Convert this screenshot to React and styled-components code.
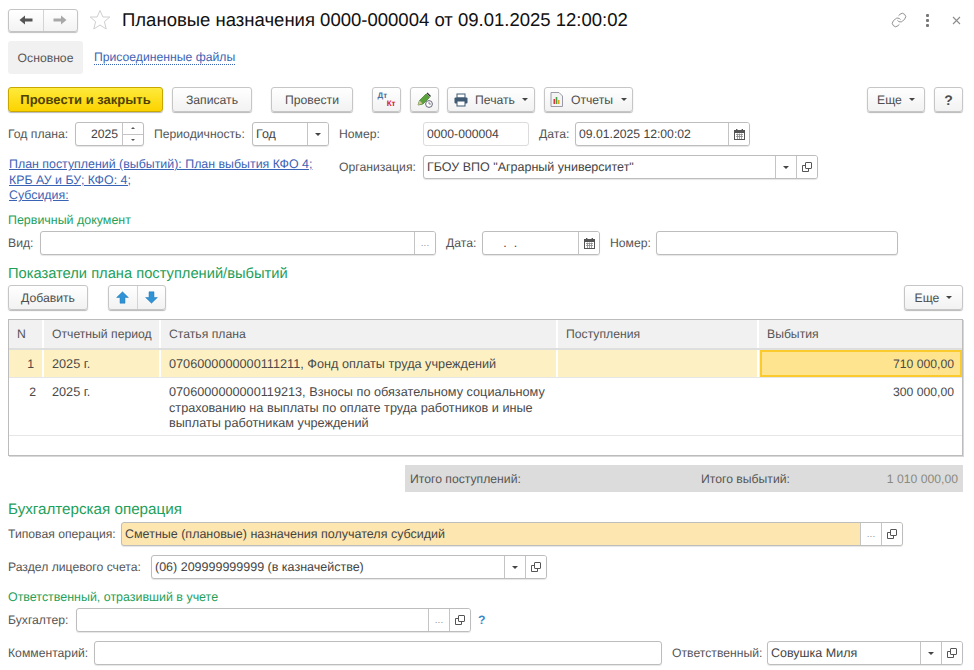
import React from "react";
import styled, { createGlobalStyle } from "styled-components";
import { Link as LinkIcon } from "lucide-react";

const GlobalStyle = createGlobalStyle`
  html, body {
    margin: 0;
    padding: 0;
    background: #fff;
  }
  body {
    font-family: "Liberation Sans", Arial, sans-serif;
    font-size: 12.2px;
    color: #4b4b4b;
    text-rendering: geometricPrecision;
  }
`;

const Page = styled.div`
  width: 974px;
  height: 670px;
  box-sizing: border-box;
  padding: 8px 11px 0 8px;
  overflow: hidden;
  display: flex;
  flex-direction: column;
`;

const Row = styled.div`
  display: flex;
  align-items: center;
  height: ${(p) => p.$h || 24}px;
  margin-top: ${(p) => p.$mt || 0}px;
  flex: none;
`;

const Spacer = styled.div`
  flex: 1;
`;

const NavGroup = styled.div`
  display: flex;
  width: 70px;
  height: 23px;
  box-sizing: border-box;
  border: 1px solid #c4c4c4;
  border-radius: 3px;
  box-shadow: 0 1px 1px rgba(0, 0, 0, 0.25);
  background: linear-gradient(#fff, #f3f3f3);
`;

const NavButton = styled.div`
  flex: 1;
  display: flex;
  align-items: center;
  justify-content: center;
  & + & {
    border-left: 1px solid #d4d4d4;
  }
`;

const StarWrap = styled.div`
  display: flex;
  margin-left: 11px;
  margin-right: 11px;
`;

const Title = styled.h1`
  margin: 0;
  font-size: 18.52px;
  font-weight: normal;
  color: #111;
  white-space: nowrap;
`;

const HeaderActions = styled.div`
  display: flex;
  align-items: center;
  margin-right: -8px;
`;

const HeaderIcon = styled.div`
  width: 29px;
  display: flex;
  justify-content: center;
  color: #808080;
`;

const Dots = styled.div`
  display: flex;
  flex-direction: column;
  gap: 2px;
  & > i {
    display: block;
    width: 3px;
    height: 3px;
    background: #777;
    border-radius: 1px;
  }
`;

const Tab = styled.div`
  width: 75px;
  height: 33px;
  display: flex;
  align-items: center;
  justify-content: center;
  background: #f1f1f1;
  border-radius: 3px;
  color: #555;
`;

const TabLink = styled.span`
  margin-left: 11px;
  color: #3b63b4;
  border-bottom: 1px dotted #3b63b4;
  line-height: 13px;
`;

const Button = styled.div`
  display: flex;
  align-items: center;
  justify-content: center;
  gap: ${(p) => p.$gap || 0}px;
  box-sizing: border-box;
  flex: none;
  width: ${(p) => p.$w}px;
  height: 25px;
  margin-left: ${(p) => p.$ml || 0}px;
  border: 1px solid ${(p) => (p.$primary ? "#c8a800" : "#c6c6c6")};
  border-radius: 3px;
  box-shadow: 0 1px 1px rgba(0, 0, 0, 0.28);
  background: ${(p) =>
    p.$primary
      ? "linear-gradient(#ffea3b, #fbd300)"
      : "linear-gradient(#fff, #f2f2f2)"};
  color: ${(p) => (p.$primary ? "#4f4100" : "#4e4e4e")};
  font-weight: ${(p) => (p.$primary || p.$bold ? "bold" : "normal")};
  font-size: ${(p) => p.$size || 12.2}px;
  white-space: nowrap;
`;

const ButtonGroup = styled(Button)`
  padding: 0;
  gap: 0;
`;

const GroupCell = styled.div`
  flex: 1;
  height: 100%;
  display: flex;
  align-items: center;
  justify-content: center;
  & + & {
    border-left: 1px solid #d4d4d4;
  }
`;

const Caret = styled.span`
  display: inline-block;
  width: 0;
  height: 0;
  border-left: 3px solid transparent;
  border-right: 3px solid transparent;
  border-top: 3px solid #444;
`;

const DebitCredit = styled.div`
  display: flex;
  flex-direction: column;
  font-size: 8px;
  font-weight: bold;
  line-height: 8px;
  width: 18px;
`;

const Debit = styled.span`
  color: #4c6e9e;
`;

const Credit = styled.span`
  color: #d4202a;
  align-self: flex-end;
`;

const Label = styled.span`
  flex: none;
  margin-left: ${(p) => p.$ml || 0}px;
  width: ${(p) => (p.$w ? `${p.$w}px` : "auto")};
  color: #555;
  white-space: nowrap;
`;

const Field = styled.div`
  display: flex;
  flex: none;
  box-sizing: border-box;
  width: ${(p) => p.$w}px;
  height: ${(p) => p.$h || 24}px;
  margin-left: ${(p) => p.$ml || 0}px;
  border: 1px solid ${(p) => (p.$light ? "#dcdcdc" : "#bdbdbd")};
  border-radius: 3px;
  background: ${(p) => p.$bg || "#fff"};
  box-shadow: ${(p) => (p.$light ? "none" : "0 1px 1px rgba(0, 0, 0, 0.1)")};
  overflow: hidden;
`;

const FieldValue = styled.div`
  flex: 1;
  display: flex;
  align-items: center;
  justify-content: ${(p) => (p.$right ? "flex-end" : "flex-start")};
  padding: 0 ${(p) => (p.$right ? 4 : 3)}px;
  color: #444;
  font-size: ${(p) => (p.$num ? 12.2 : 12.5)}px;
  white-space: nowrap;
  min-width: 0;
`;

const Addon = styled.div`
  flex: none;
  width: 20px;
  display: flex;
  align-items: center;
  justify-content: center;
  border-left: 1px solid #c4c4c4;
  color: #999;
  background: #fff;
  font-size: 10px;
`;

const Spin = styled.div`
  flex: none;
  width: 20px;
  display: flex;
  flex-direction: column;
  border-left: 1px solid #c4c4c4;
`;

const SpinPart = styled.div`
  flex: 1;
  display: flex;
  align-items: center;
  justify-content: center;
  & + & {
    border-top: 1px solid #c4c4c4;
  }
`;

const SpinArrow = styled.span`
  width: 0;
  height: 0;
  border-left: 2px solid transparent;
  border-right: 2px solid transparent;
  ${(p) => (p.$up ? "border-bottom" : "border-top")}: 2px solid #555;
`;

const OrgRow = styled.div`
  display: flex;
  align-items: flex-start;
  margin-top: 9px;
  height: 58px;
  flex: none;
`;

const LinksBlock = styled.div`
  width: 331px;
  flex: none;
  display: flex;
  flex-direction: column;
  align-items: flex-start;
  padding-left: 1px;
  padding-top: 2px;
  box-sizing: border-box;
  font-size: 12.4px;
  line-height: 15.5px;
`;

const PlanLink = styled.span`
  color: #3b63b4;
  text-decoration: underline;
  white-space: nowrap;
`;

const OrgField = styled.div`
  display: flex;
  align-items: center;
`;

const GroupTitle = styled.div`
  color: #1ea05a;
  font-size: ${(p) => p.$size || 12.45}px;
  margin-top: ${(p) => p.$mt || 0}px;
  height: ${(p) => p.$h || 14}px;
  line-height: ${(p) => p.$h || 14}px;
  flex: none;
  white-space: nowrap;
`;

const Table = styled.div`
  flex: none;
  width: 955px;
  height: 137px;
  margin-top: 9px;
  box-sizing: border-box;
  border: 1px solid #bcbcbc;
  box-shadow: 1px 1px 0 #d8d8d8;
  background: #fff;
`;

const TableRow = styled.div`
  display: grid;
  grid-template-columns: 35px 117px 397px 201px 203px;
  height: ${(p) => p.$h}px;
  box-sizing: border-box;
  background: ${(p) => p.$bg || "#fff"};
  border-bottom: ${(p) => p.$line || "1px solid #e6e6e6"};
`;

const HeadCell = styled.div`
  display: flex;
  align-items: center;
  padding-left: 8px;
  color: #555;
  white-space: nowrap;
  border-right: 2px solid #fff;
  &:last-child {
    border-right: 0;
  }
`;

const Cell = styled.div`
  box-sizing: border-box;
  padding: ${(p) => (p.$tall ? "7px" : "2px")} 8px 0 8px;
  display: flex;
  align-items: ${(p) => (p.$tall ? "flex-start" : "center")};
  justify-content: ${(p) => (p.$right ? "flex-end" : "flex-start")};
  color: #4a4a4a;
  font-size: ${(p) => (p.$right ? 12.2 : 12.7)}px;
  line-height: 15.5px;
  border-right: ${(p) => (p.$divider ? "2px solid #fff" : "0")};
  background: ${(p) => (p.$active ? "#fee48f" : "transparent")};
  outline: ${(p) => (p.$active ? "2px solid #fbcb2e" : "0")};
  outline-offset: -2px;
  margin-left: ${(p) => (p.$active ? 1 : 0)}px;
`;

const Totals = styled.div`
  flex: none;
  display: flex;
  align-items: center;
  align-self: flex-end;
  width: 558px;
  height: 27px;
  margin-top: 9px;
  box-sizing: border-box;
  padding: 0 5px;
  background: #dcdcdc;
  color: #555;
`;

const TotalSum = styled.span`
  margin-left: auto;
  color: #8a8a80;
`;

const HelpMark = styled.span`
  margin-left: 7px;
  color: #3a87c8;
  font-weight: bold;
`;

const IconCopy = () => (
  <svg width="12" height="12" viewBox="0 0 12 12" fill="none" stroke="#555" strokeWidth="1">
    <rect x="4.5" y="1.5" width="6" height="6" rx="0.5" />
    <path d="M4.5 4.5H1.5V10.5H7.5V7.5" />
  </svg>
);

const IconCalendar = () => (
  <svg width="11" height="11" viewBox="0 0 11 11">
    <rect x="0.5" y="1.5" width="10" height="9" fill="#fff" stroke="#555" />
    <rect x="0.5" y="1" width="10" height="3" fill="#555" />
    <rect x="2" y="0" width="1.4" height="2" fill="#555" />
    <rect x="7.6" y="0" width="1.4" height="2" fill="#555" />
    <path d="M2 5.5H9M2 7.5H9M3.5 4.5V10M5.5 4.5V10M7.5 4.5V10" stroke="#888" strokeWidth="0.8" />
  </svg>
);

const IconNavArrow = ({ flip, color }) => (
  <svg width="14" height="10" viewBox="0 0 14 10" style={flip ? { transform: "scaleX(-1)" } : undefined}>
    <path d="M0.5 5L6 0.5V3.6H13.5V6.4H6V9.5Z" fill={color} />
  </svg>
);

const IconStar = () => (
  <svg width="22" height="22" viewBox="0 0 22 22" fill="#fff" stroke="#cfcfcf" strokeWidth="1">
    <path d="M11 1.5L13.9 8H20.8L15.4 12.6L17.2 20L11 16L4.8 20L6.6 12.6L1.2 8H8.1Z" />
  </svg>
);

const IconClose = () => (
  <svg width="9" height="9" viewBox="0 0 9 9" stroke="#8c8c8c" strokeWidth="1.1">
    <path d="M1 1L8 8M8 1L1 8" />
  </svg>
);

const IconPencil = () => (
  <svg width="18" height="18" viewBox="0 0 18 18">
    <path d="M2 14L3.5 9.5L10 3L13.5 6.5L7 13Z" fill="#5aa33c" stroke="#3d7c26" strokeWidth="0.7" />
    <path d="M2 14L3.5 9.5L6.5 12.5Z" fill="#d9c39a" />
    <path d="M10.5 2.5L11.5 1.5L15 5L14 6Z" fill="#333" />
    <circle cx="13" cy="13" r="3.4" fill="#fff" stroke="#667" />
    <path d="M13 11V13H15" fill="none" stroke="#667" strokeWidth="0.8" />
  </svg>
);

const IconPrinter = () => (
  <svg width="14" height="14" viewBox="0 0 14 14">
    <rect x="3" y="1" width="8" height="4" fill="#fff" stroke="#3f5a72" />
    <rect x="0.5" y="4.5" width="13" height="6" rx="1" fill="#3f5a72" />
    <rect x="3" y="8" width="8" height="5" fill="#fff" stroke="#3f5a72" />
  </svg>
);

const IconReport = () => (
  <svg width="13" height="15" viewBox="0 0 13 15">
    <path d="M1 .5H9L12.5 4V14.5H1Z" fill="#f4f4f4" stroke="#9a9aa8" />
    <rect x="3.5" y="7" width="1.6" height="5" fill="#d8333a" />
    <rect x="5.7" y="5" width="1.6" height="7" fill="#46a046" />
    <rect x="7.9" y="8" width="1.6" height="4" fill="#e0a020" />
  </svg>
);

const IconBlueArrow = ({ down }) => (
  <svg width="13" height="13" viewBox="0 0 13 13" style={down ? { transform: "scaleY(-1)" } : undefined}>
    <path d="M6.5 .8L12.4 6.5H9V12.2H4V6.5H.6Z" fill="#2f93d6" stroke="#2278b4" strokeWidth="0.5" />
  </svg>
);

const Dropdown = () => (
  <Addon>
    <Caret />
  </Addon>
);

const Choose = () => <Addon>...</Addon>;

const Open = () => (
  <Addon>
    <IconCopy />
  </Addon>
);

const Calendar = () => (
  <Addon>
    <IconCalendar />
  </Addon>
);

const rows = [
  {
    n: 1,
    period: "2025 г.",
    item: "0706000000000111211, Фонд оплаты труда учреждений",
    income: "",
    outcome: "710 000,00",
  },
  {
    n: 2,
    period: "2025 г.",
    item: "0706000000000119213, Взносы по обязательному социальному страхованию на выплаты по оплате труда работников и иные выплаты работникам учреждений",
    income: "",
    outcome: "300 000,00",
  },
];

const App = () => {
  return (
    <>
      <GlobalStyle />
      <Page>
        <Row $h={24}>
          <NavGroup>
            <NavButton>
              <IconNavArrow color="#555" />
            </NavButton>
            <NavButton>
              <IconNavArrow flip color="#a8a8a8" />
            </NavButton>
          </NavGroup>
          <StarWrap>
            <IconStar />
          </StarWrap>
          <Title>Плановые назначения 0000-000004 от 09.01.2025 12:00:02</Title>
          <Spacer />
          <HeaderActions>
            <HeaderIcon>
              <LinkIcon size={16} strokeWidth={1.3} />
            </HeaderIcon>
            <HeaderIcon>
              <Dots>
                <i />
                <i />
                <i />
              </Dots>
            </HeaderIcon>
            <HeaderIcon>
              <IconClose />
            </HeaderIcon>
          </HeaderActions>
        </Row>

        <Row $h={33} $mt={9}>
          <Tab>Основное</Tab>
          <TabLink>Присоединенные файлы</TabLink>
        </Row>

        <Row $h={25} $mt={13}>
          <Button $primary $w={155} $size={13}>Провести и закрыть</Button>
          <Button $w={80} $ml={9}>Записать</Button>
          <Button $w={82} $ml={19}>Провести</Button>
          <Button $w={29} $ml={19}>
            <DebitCredit>
              <Debit>Дт</Debit>
              <Credit>Кт</Credit>
            </DebitCredit>
          </Button>
          <Button $w={29} $ml={9}>
            <IconPencil />
          </Button>
          <Button $w={88} $ml={8} $gap={7}>
            <IconPrinter />
            Печать
            <Caret />
          </Button>
          <Button $w={89} $ml={9} $gap={8}>
            <IconReport />
            Отчеты
            <Caret />
          </Button>
          <Spacer />
          <Button $w={58} $gap={7}>
            Еще
            <Caret />
          </Button>
          <Button $w={29} $ml={9} $bold $size={14}>?</Button>
        </Row>

        <Row $h={24} $mt={10}>
          <Label $w={67}>Год плана:</Label>
          <Field $w={69}>
            <FieldValue $right $num>2025</FieldValue>
            <Spin>
              <SpinPart>
                <SpinArrow $up />
              </SpinPart>
              <SpinPart>
                <SpinArrow />
              </SpinPart>
            </Spin>
          </Field>
          <Label $w={98} $ml={10}>Периодичность:</Label>
          <Field $w={77}>
            <FieldValue>Год</FieldValue>
            <Dropdown />
          </Field>
          <Label $w={84} $ml={10}>Номер:</Label>
          <Field $w={106} $light>
            <FieldValue $num>0000-000004</FieldValue>
          </Field>
          <Label $w={36} $ml={10}>Дата:</Label>
          <Field $w={175}>
            <FieldValue $num>09.01.2025 12:00:02</FieldValue>
            <Calendar />
          </Field>
        </Row>

        <OrgRow>
          <LinksBlock>
            <PlanLink>План поступлений (выбытий): План выбытия КФО 4;</PlanLink>
            <PlanLink>КРБ АУ и БУ; КФО: 4;</PlanLink>
            <PlanLink>Субсидия:</PlanLink>
          </LinksBlock>
          <OrgField>
            <Label $w={84}>Организация:</Label>
            <Field $w={395}>
              <FieldValue>ГБОУ ВПО "Аграрный университет"</FieldValue>
              <Dropdown />
              <Open />
            </Field>
          </OrgField>
        </OrgRow>

        <GroupTitle>Первичный документ</GroupTitle>

        <Row $h={24} $mt={4}>
          <Label $w={32}>Вид:</Label>
          <Field $w={396}>
            <FieldValue />
            <Choose />
          </Field>
          <Label $w={36} $ml={10}>Дата:</Label>
          <Field $w={118}>
            <FieldValue>&nbsp;&nbsp;&nbsp;&nbsp;&nbsp;.&nbsp;&nbsp;.</FieldValue>
            <Calendar />
          </Field>
          <Label $w={46} $ml={10}>Номер:</Label>
          <Field $w={242}>
            <FieldValue />
          </Field>
        </Row>

        <GroupTitle $size={14.7} $h={18} $mt={10}>Показатели плана поступлений/выбытий</GroupTitle>

        <Row $h={25} $mt={2}>
          <Button $w={80}>Добавить</Button>
          <ButtonGroup $w={58} $ml={20}>
            <GroupCell>
              <IconBlueArrow />
            </GroupCell>
            <GroupCell>
              <IconBlueArrow down />
            </GroupCell>
          </ButtonGroup>
          <Spacer />
          <Button $w={59} $gap={7}>
            Еще
            <Caret />
          </Button>
        </Row>

        <Table>
          <TableRow $h={30} $bg="#f1f1f1" $line="2px solid #dedede">
            <HeadCell>N</HeadCell>
            <HeadCell>Отчетный период</HeadCell>
            <HeadCell>Статья плана</HeadCell>
            <HeadCell>Поступления</HeadCell>
            <HeadCell>Выбытия</HeadCell>
          </TableRow>
          {rows.map((row, index) => {
            const selected = index === 0;
            return (
              <TableRow key={row.n} $h={selected ? 28 : 58} $bg={selected ? "#fdf1c4" : "#fff"}>
                <Cell $right $tall={!selected} $divider={selected}>{row.n}</Cell>
                <Cell $tall={!selected} $divider={selected}>{row.period}</Cell>
                <Cell $tall={!selected} $divider={selected}>{row.item}</Cell>
                <Cell $tall={!selected} $divider={selected}>{row.income}</Cell>
                <Cell $right $tall={!selected} $active={selected}>{row.outcome}</Cell>
              </TableRow>
            );
          })}
        </Table>

        <Totals>
          <Label $w={291}>Итого поступлений:</Label>
          <Label>Итого выбытий:</Label>
          <TotalSum>1 010 000,00</TotalSum>
        </Totals>

        <GroupTitle $size={15.2} $h={18} $mt={9}>Бухгалтерская операция</GroupTitle>

        <Row $h={24} $mt={3}>
          <Label $w={113}>Типовая операция:</Label>
          <Field $w={782} $bg="#fde6b0">
            <FieldValue>Сметные (плановые) назначения получателя субсидий</FieldValue>
            <Choose />
            <Open />
          </Field>
        </Row>

        <Row $h={24} $mt={9}>
          <Label $w={143}>Раздел лицевого счета:</Label>
          <Field $w={396}>
            <FieldValue>(06) 209999999999 (в казначействе)</FieldValue>
            <Dropdown />
            <Open />
          </Field>
        </Row>

        <GroupTitle $mt={11}>Ответственный, отразивший в учете</GroupTitle>

        <Row $h={24} $mt={4}>
          <Label $w={68}>Бухгалтер:</Label>
          <Field $w={395}>
            <FieldValue />
            <Choose />
            <Open />
          </Field>
          <HelpMark>?</HelpMark>
        </Row>

        <Row $h={24} $mt={9}>
          <Label $w={86}>Комментарий:</Label>
          <Field $w={568}>
            <FieldValue />
          </Field>
          <Label $w={95} $ml={10}>Ответственный:</Label>
          <Field $w={196}>
            <FieldValue>Совушка Миля</FieldValue>
            <Dropdown />
            <Open />
          </Field>
        </Row>
      </Page>
    </>
  );
};

export default App;
